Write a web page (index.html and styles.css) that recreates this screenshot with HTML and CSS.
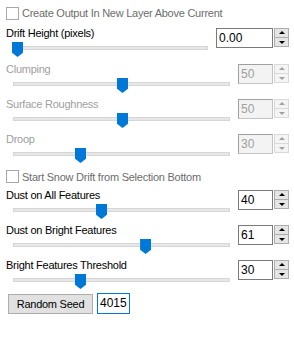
FILE: index.html
```html
<!DOCTYPE html>
<html lang="en">
<head>
    <meta charset="UTF-8">
    <title>Snow Drift</title>
    <link rel="stylesheet" href="styles.css">
</head>
<body>
    <div class="panel">
        <label class="check">
            <span class="check-box"></span>
            <span class="check-text">Create Output In New Layer Above Current</span>
        </label>

        <div class="field field-wide">
            <div class="field-label">Drift Height (pixels)</div>
            <div class="slider slider-short">
                <div class="track"></div>
                <div class="rail"><span class="thumb" style="left: 0%;"></span></div>
            </div>
            <div class="spin">
                <div class="spin-box spin-box-wide">0.00</div>
                <div class="spin-btns"><span class="spin-btn up"></span><span class="spin-btn down"></span></div>
            </div>
        </div>

        <div class="field disabled">
            <div class="field-label">Clumping</div>
            <div class="slider">
                <div class="track"></div>
                <div class="rail"><span class="thumb" style="left: 50%;"></span></div>
            </div>
            <div class="spin">
                <div class="spin-box">50</div>
                <div class="spin-btns"><span class="spin-btn up"></span><span class="spin-btn down"></span></div>
            </div>
        </div>

        <div class="field disabled">
            <div class="field-label">Surface Roughness</div>
            <div class="slider">
                <div class="track"></div>
                <div class="rail"><span class="thumb" style="left: 50%;"></span></div>
            </div>
            <div class="spin">
                <div class="spin-box">50</div>
                <div class="spin-btns"><span class="spin-btn up"></span><span class="spin-btn down"></span></div>
            </div>
        </div>

        <div class="field disabled">
            <div class="field-label">Droop</div>
            <div class="slider">
                <div class="track"></div>
                <div class="rail"><span class="thumb" style="left: 30%;"></span></div>
            </div>
            <div class="spin">
                <div class="spin-box">30</div>
                <div class="spin-btns"><span class="spin-btn up"></span><span class="spin-btn down"></span></div>
            </div>
        </div>

        <label class="check check-second">
            <span class="check-box"></span>
            <span class="check-text">Start Snow Drift from Selection Bottom</span>
        </label>

        <div class="field">
            <div class="field-label">Dust on All Features</div>
            <div class="slider">
                <div class="track"></div>
                <div class="rail"><span class="thumb" style="left: 40%;"></span></div>
            </div>
            <div class="spin">
                <div class="spin-box">40</div>
                <div class="spin-btns"><span class="spin-btn up"></span><span class="spin-btn down"></span></div>
            </div>
        </div>

        <div class="field">
            <div class="field-label">Dust on Bright Features</div>
            <div class="slider">
                <div class="track"></div>
                <div class="rail"><span class="thumb" style="left: 61%;"></span></div>
            </div>
            <div class="spin">
                <div class="spin-box">61</div>
                <div class="spin-btns"><span class="spin-btn up"></span><span class="spin-btn down"></span></div>
            </div>
        </div>

        <div class="field">
            <div class="field-label">Bright Features Threshold</div>
            <div class="slider">
                <div class="track"></div>
                <div class="rail"><span class="thumb" style="left: 30%;"></span></div>
            </div>
            <div class="spin">
                <div class="spin-box">30</div>
                <div class="spin-btns"><span class="spin-btn up"></span><span class="spin-btn down"></span></div>
            </div>
        </div>

        <div class="seed-row">
            <button class="seed-button">Random Seed</button>
            <div class="seed-box">4015</div>
        </div>
    </div>
</body>
</html>
```

FILE: styles.css
```css
body {
    margin: 0;
    background: #ffffff;
    font-family: 'Liberation Sans', Arial, sans-serif;
    font-size: 11px;
    letter-spacing: -0.25px;
    color: #000;
}

.panel {
    width: 294px;
    padding-top: 3px;
}

/* checkboxes */
.check {
    display: flex;
    align-items: center;
    height: 20px;
    padding-left: 6px;
    color: #6d6d6d;
}

.check-second {
    margin-top: 2px;
    height: 19px;
}

.check-box {
    width: 11px;
    height: 11px;
    border: 1px solid #a8a8a8;
    background: #fff;
    margin-right: 3px;
}

/* label + slider + spinner */
.field {
    display: grid;
    grid-template-columns: 238px 56px;
    grid-template-rows: 16px 16px;
    height: 35px;
}

.field-wide {
    grid-template-columns: 216px 78px;
    margin-top: 1px;
    height: 36px;
}

.field-label {
    grid-column: 1;
    grid-row: 1;
    padding-left: 6px;
    margin-top: 2px;
    line-height: 14px;
    white-space: nowrap;
}

.disabled .field-label {
    color: #a0a0a0;
}

.slider {
    grid-column: 1;
    grid-row: 2;
    position: relative;
    margin-left: 13px;
    width: 217px;
    height: 16px;
}

.slider-short {
    width: 195px;
}

.track {
    position: absolute;
    left: 0;
    right: 0;
    top: 6px;
    height: 2px;
    background: #e7e7e7;
    border: 1px solid #d6d6d6;
}

.rail {
    position: absolute;
    left: 4px;
    right: 3px;
    top: 0;
    height: 16px;
}

.thumb {
    position: absolute;
    top: 2px;
    width: 11px;
    height: 15px;
    margin-left: -5px;
    background: #0078d7;
    clip-path: polygon(0 0, 100% 0, 100% 72%, 50% 100%, 0 72%);
}

/* numeric up-down */
.spin {
    grid-column: 2;
    grid-row: 1 / span 2;
    display: flex;
    align-items: flex-start;
    margin-top: 4px;
}

.spin-box {
    box-sizing: border-box;
    width: 35px;
    height: 20px;
    border: 1px solid #7a7a7a;
    background: #fff;
    font-size: 12px;
    letter-spacing: 0;
    line-height: 18px;
    padding-left: 2px;
    color: #000;
}

.spin-box-wide {
    width: 57px;
}

.spin-btns {
    display: flex;
    flex-direction: column;
    margin-left: 1px;
    gap: 0;
}

.spin-btn {
    position: relative;
    box-sizing: border-box;
    width: 15px;
    height: 10px;
    background: #e5e5e5;
    border: 1px solid #adadad;
}

.spin-btn.down {
    margin-top: -1px;
}

.spin-btn::after {
    content: '';
    position: absolute;
    left: 4px;
    top: 2px;
    border-left: 3px solid transparent;
    border-right: 3px solid transparent;
}

.spin-btn.up::after {
    border-bottom: 3px solid #000;
}

.spin-btn.down::after {
    top: 3px;
    border-top: 3px solid #000;
}

.disabled .spin-box {
    background: #f3f3f3;
    border-color: #c4c4c4;
    border-top-color: #a0a0a0;
    border-left-color: #a0a0a0;
    color: #a0a0a0;
}

.disabled .spin-btn {
    background: #f4f4f4;
    border-color: #d9d9d9;
}

.disabled .spin-btn.up::after {
    border-bottom-color: #a0a0a0;
}

.disabled .spin-btn.down::after {
    border-top-color: #a0a0a0;
}

/* random seed */
.seed-row {
    display: flex;
    align-items: center;
    margin-top: 2px;
    padding-left: 8px;
    height: 21px;
}

.seed-button {
    box-sizing: border-box;
    width: 85px;
    height: 20px;
    padding: 0;
    border: 1px solid #adadad;
    background: #e1e1e1;
    font-family: 'Liberation Sans', Arial, sans-serif;
    font-size: 11px;
    letter-spacing: -0.25px;
    color: #000;
}

.seed-box {
    box-sizing: border-box;
    width: 33px;
    height: 21px;
    margin-left: 4px;
    border: 1px solid #0078d7;
    background: #fff;
    font-size: 12px;
    letter-spacing: 0;
    line-height: 19px;
    padding-left: 2px;
}
```
